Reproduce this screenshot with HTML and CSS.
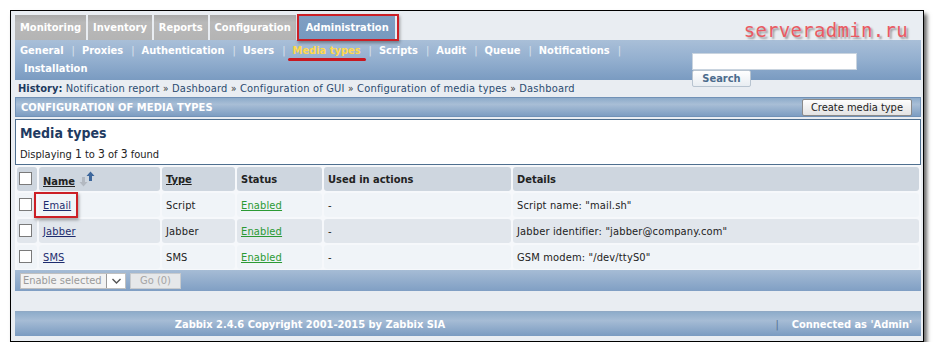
FILE: index.html
```html
<!DOCTYPE html>
<html>
<head>
<meta charset="utf-8">
<title>Zabbix - Media types</title>
<link rel="stylesheet" href="styles.css">
</head>
<body>
<div class="frame">
  <div class="header">
    <div class="tabs">
      <span class="tab">Monitoring</span>
      <span class="tab">Inventory</span>
      <span class="tab">Reports</span>
      <span class="tab">Configuration</span>
      <span class="tab tab-active">Administration</span>
    </div>
    <div class="watermark">serveradmin.ru</div>
    <div class="submenu">
      <div class="sublinks">
        <span class="sl">General</span><span class="sep">|</span><wbr><span class="sl">Proxies</span><span class="sep">|</span><wbr><span class="sl">Authentication</span><span class="sep">|</span><wbr><span class="sl">Users</span><span class="sep">|</span><wbr><span class="sl sl-active">Media types</span><span class="sep">|</span><wbr><span class="sl">Scripts</span><span class="sep">|</span><wbr><span class="sl">Audit</span><span class="sep">|</span><wbr><span class="sl">Queue</span><span class="sep">|</span><wbr><span class="sl">Notifications</span><span class="sep">|</span><wbr><span class="sl sl-wrap">Installation</span>
      </div>
    </div>
    <form class="search">
      <input class="search-input" type="text">
      <button class="search-btn" type="button">Search</button>
    </form>
    <div class="history"><b>History:</b> Notification report <span class="raq">»</span> Dashboard <span class="raq">»</span> Configuration of GUI <span class="raq">»</span> Configuration of media types <span class="raq">»</span> Dashboard</div>
  </div>

  <div class="section-head">
    <span class="section-title">CONFIGURATION OF MEDIA TYPES</span>
    <button class="btn-create" type="button">Create media type</button>
  </div>

  <div class="listbox">
    <div class="list-title">Media types</div>
    <div class="list-count">Displaying <span class="num">1</span> to <span class="num">3</span> of <span class="num">3</span> found</div>
  </div>

  <table class="grid">
    <thead>
      <tr>
        <th class="c-chk"><span class="chk"></span></th>
        <th class="c-name"><span class="hl">Name</span>
          <svg class="sort" width="16" height="16" viewBox="0 0 16 16"><path d="M3 6h3v5h2.5l-4 4.5-4-4.5H3z" fill="#b3b9c1"/><path d="M11.5 0.5l4 4.5H13v5h-3V5H7.5z" fill="#3d679c"/></svg>
        </th>
        <th class="c-type"><span class="hl">Type</span></th>
        <th class="c-status">Status</th>
        <th class="c-used">Used in actions</th>
        <th class="c-det">Details</th>
      </tr>
    </thead>
    <tbody>
      <tr class="odd">
        <td><span class="chk"></span></td>
        <td><a class="lnk mark">Email</a></td>
        <td>Script</td>
        <td><a class="en">Enabled</a></td>
        <td>-</td>
        <td>Script name: "mail.sh"</td>
      </tr>
      <tr class="even">
        <td><span class="chk"></span></td>
        <td><a class="lnk">Jabber</a></td>
        <td>Jabber</td>
        <td><a class="en">Enabled</a></td>
        <td>-</td>
        <td>Jabber identifier: "jabber@company.com"</td>
      </tr>
      <tr class="odd">
        <td><span class="chk"></span></td>
        <td><a class="lnk">SMS</a></td>
        <td>SMS</td>
        <td><a class="en">Enabled</a></td>
        <td>-</td>
        <td>GSM modem: "/dev/ttyS0"</td>
      </tr>
    </tbody>
  </table>

  <div class="tablefoot">
    <span class="sel"><span class="sel-text">Enable selected</span><span class="sel-arrow"><svg width="11" height="8" viewBox="0 0 11 8"><path d="M1.5 2l4 4 4-4" fill="none" stroke="#555" stroke-width="1.4"/></svg></span></span>
    <span class="go">Go (0)</span>
  </div>

  <div class="footer">
    <div class="copy">Zabbix 2.4.6 Copyright 2001-2015 by Zabbix SIA</div>
    <div class="conn"><span class="fsep">|</span>Connected as 'Admin'</div>
  </div>
</div>
</body>
</html>
```

FILE: styles.css
```css
* { box-sizing: border-box; }

body {
  margin: 0;
  background: #fff;
  font-family: "DejaVu Sans Condensed", "DejaVu Sans", sans-serif;
  font-size: 11px;
  color: #222;
}

.frame {
  margin: 10px 0 0 10px;
  width: 914px;
  height: 332px;
  border: 1px solid #000;
  background: #e9edf2;
  padding: 4px 2px 0 4px;
  box-shadow: 3px 4px 4px rgba(0, 0, 0, 0.6);
}

.header { position: relative; }

/* main tabs */
.tabs {
  display: flex;
  height: 25px;
}
.tab {
  display: block;
  height: 25px;
  line-height: 25px;
  padding: 0 5px;
  margin-right: 2px;
  color: #fff;
  font-weight: bold;
  background: linear-gradient(#a9a9a9, #b9b9b9 30%, #b4b4b4);
  white-space: nowrap;
}
.tab-active {
  position: relative;
  background: linear-gradient(#7f9fc3, #7799bf);
  padding: 0 6px 0 8px;
}
.tab-active::after {
  content: "";
  position: absolute;
  left: -1px;
  top: -1px;
  right: -4px;
  bottom: -1px;
  border: 2px solid #cc1f26;
  box-shadow: 1px 2px 3px rgba(0, 0, 0, 0.35);
}

.watermark {
  position: absolute;
  right: 13px;
  top: 2px;
  font-family: "DejaVu Sans Mono", monospace;
  font-size: 19px;
  line-height: 26px;
  letter-spacing: 0.3px;
  color: #ea5a62;
  text-shadow: 2px 2px 2px rgba(0, 0, 0, 0.35);
}

/* sub menu */
.submenu {
  height: 40px;
  background: linear-gradient(#a9bfd8, #93afcf 50%, #7a9bc1);
  padding: 2px 0 0 5px;
}
.sublinks {
  width: 630px;
  line-height: 18px;
  font-weight: bold;
  color: #fff;
}
.sl { white-space: nowrap; }
.sl-active {
  color: #ffd84c;
  position: relative;
}
.sl-active::after {
  content: "";
  position: absolute;
  left: -5px;
  right: -5px;
  bottom: -4px;
  height: 3px;
  border-radius: 2px;
  background: #c8171f;
}
.sl-wrap { margin-left: 4px; }
.sep {
  color: #d9e2ec;
  font-weight: normal;
  margin: 0 7px 0 8px;
}

.search {
  position: absolute;
  left: 677px;
  top: 38px;
  display: flex;
  flex-direction: column;
  align-items: flex-start;
}
.search-input {
  width: 165px;
  height: 17px;
  border: 1px solid #c9d4df;
  background: #fff;
  margin: 0;
  padding: 0;
}
.search-btn {
  width: 59px;
  height: 17px;
  margin: 0;
  padding: 0;
  border: 1px solid #b8c4d0;
  border-radius: 2px;
  background: linear-gradient(#ffffff, #e8edf2);
  font-family: inherit;
  font-size: 11px;
  font-weight: bold;
  color: #4b6b8c;
}

.history {
  height: 17px;
  line-height: 17px;
  padding-left: 3px;
  color: #2b4b70;
  letter-spacing: 0.2px;
}
.history b { color: #1e3a5f; letter-spacing: 0; }
.raq { font-size: 10px; color: #333; }

/* section head */
.section-head {
  display: flex;
  align-items: center;
  justify-content: space-between;
  height: 20px;
  padding: 0 8px 0 5px;
  background: linear-gradient(#8dabca, #a8bed6 35%, #7d9dc2);
  border: 1px solid #7191b6;
}
.section-title {
  color: #fff;
  font-weight: bold;
  letter-spacing: 0.1px;
}
.btn-create {
  height: 17px;
  padding: 0 8px;
  border: 1px solid #8a8a8a;
  border-radius: 2px;
  background: linear-gradient(#fdfdfd, #e3e3e3);
  font-family: inherit;
  font-size: 11px;
  color: #222;
}

.listbox {
  margin-top: 2px;
  height: 46px;
  border: 1px solid #4f6f8f;
  background: #fff;
  padding: 3px 0 0 4px;
}
.list-title {
  font-size: 14px;
  font-weight: bold;
  color: #1f3b62;
  line-height: 20px;
}
.list-count {
  margin-top: 4px;
  line-height: 14px;
}
.num { font-size: 12px; }

/* grid */
.grid {
  width: 100%;
  border-collapse: separate;
  border-spacing: 2px;
  background: #f6f8fb;
  table-layout: fixed;
  letter-spacing: 0.15px;
}
.grid th, .grid td {
  height: 24px;
  padding: 0 4px;
  border-radius: 3px;
  text-align: left;
  white-space: nowrap;
}
.grid th {
  background: #ced6df;
  font-weight: bold;
  color: #222;
  letter-spacing: 0;
}
.c-chk { width: 20px; }
.c-name { width: 121px; }
.c-type { width: 73px; }
.c-status { width: 85px; }
.c-used { width: 187px; }
.hl { text-decoration: underline; }
.sort { vertical-align: -2px; margin-left: 1px; }

.grid tr.odd td { background: #f0f4f8; }
.grid tr.even td { background: #e1e6ec; }
.grid td:first-child, .grid th:first-child { padding: 0 0 0 2px; vertical-align: top; padding-top: 5px; }

.chk {
  display: block;
  width: 13px;
  height: 13px;
  border: 1px solid #7a7a7a;
  background: #fff;
}

.lnk {
  color: #1d2c6e;
  text-decoration: underline;
}
.mark { position: relative; }
.mark::after {
  content: "";
  position: absolute;
  left: -9px;
  top: -7px;
  right: -7px;
  bottom: -6px;
  border: 2px solid #cc1f26;
  box-shadow: 1px 2px 3px rgba(0, 0, 0, 0.35);
}
.en {
  color: #2b9a34;
  text-decoration: underline;
}

.tablefoot {
  height: 21px;
  display: flex;
  align-items: center;
  gap: 4px;
  padding-left: 5px;
  background: linear-gradient(#a6bcd5, #809fc4);
  margin-top: -1px;
}
.sel {
  display: flex;
  width: 106px;
  height: 16px;
  background: #f2f2f2;
  border: 1px solid #c0c0c0;
}
.sel-text {
  flex: 1;
  color: #9a9a9a;
  line-height: 14px;
  padding-left: 2px;
}
.sel-arrow {
  width: 19px;
  border-left: 1px solid #999;
  background: #fff;
  display: flex;
  align-items: center;
  justify-content: center;
}
.go {
  width: 51px;
  height: 16px;
  line-height: 14px;
  text-align: center;
  background: #e6e8ea;
  border: 1px solid #c8cbce;
  color: #a5a5a5;
}

.footer {
  margin-top: 20px;
  height: 25px;
  display: flex;
  align-items: center;
  background: linear-gradient(#8eacca, #a6bcd5 35%, #7a9bc1);
  border-top: 1px solid #90a9c5;
  color: #fff;
  font-weight: bold;
}
.copy {
  width: 590px;
  text-align: center;
}
.conn {
  flex: 1;
  text-align: right;
  padding-right: 9px;
}
.fsep {
  color: #55708f;
  font-weight: normal;
  margin-right: 13px;
}
```
